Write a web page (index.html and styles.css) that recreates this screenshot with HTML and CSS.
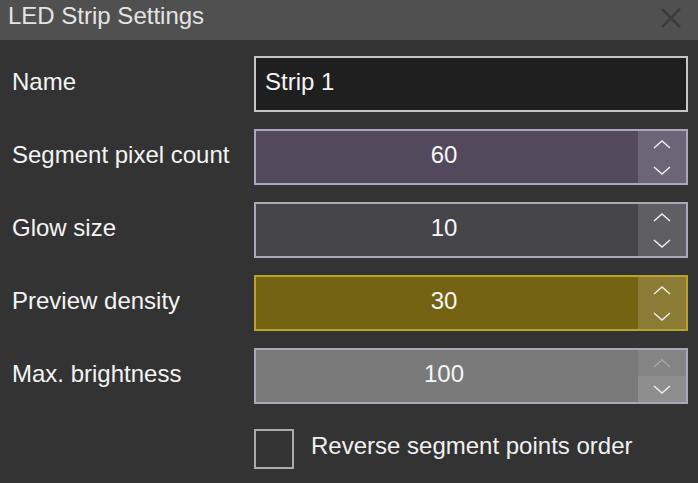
FILE: index.html
```html
<!DOCTYPE html>
<html>
<head>
<meta charset="utf-8">
<link rel="stylesheet" href="styles.css">
</head>
<body>
<div class="dialog">
  <div class="titlebar">
    <span class="title">LED Strip Settings</span>
    <svg class="close" width="22" height="22" viewBox="0 0 22 22"><path d="M2 2L20 20M20 2L2 20" stroke="#3b3b3b" stroke-width="2.6" fill="none"/></svg>
  </div>
  <div class="form">
    <div class="row">
      <span class="label">Name</span>
      <div class="text-input">Strip 1</div>
    </div>
    <div class="row">
      <span class="label">Segment pixel count</span>
      <div class="spin spin-purple">
        <div class="value">60</div>
        <div class="buttons">
          <div class="btn"><svg width="18" height="9" viewBox="0 0 18 9"><path d="M1 8L9 1L17 8" stroke="#f0f0f0" stroke-width="1.4" fill="none"/></svg></div>
          <div class="btn"><svg width="18" height="9" viewBox="0 0 18 9"><path d="M1 1L9 8L17 1" stroke="#f0f0f0" stroke-width="1.4" fill="none"/></svg></div>
        </div>
      </div>
    </div>
    <div class="row">
      <span class="label">Glow size</span>
      <div class="spin spin-gray">
        <div class="value">10</div>
        <div class="buttons">
          <div class="btn"><svg width="18" height="9" viewBox="0 0 18 9"><path d="M1 8L9 1L17 8" stroke="#f0f0f0" stroke-width="1.4" fill="none"/></svg></div>
          <div class="btn"><svg width="18" height="9" viewBox="0 0 18 9"><path d="M1 1L9 8L17 1" stroke="#f0f0f0" stroke-width="1.4" fill="none"/></svg></div>
        </div>
      </div>
    </div>
    <div class="row">
      <span class="label">Preview density</span>
      <div class="spin spin-yellow">
        <div class="value">30</div>
        <div class="buttons">
          <div class="btn"><svg width="18" height="9" viewBox="0 0 18 9"><path d="M1 8L9 1L17 8" stroke="#f0f0f0" stroke-width="1.4" fill="none"/></svg></div>
          <div class="btn"><svg width="18" height="9" viewBox="0 0 18 9"><path d="M1 1L9 8L17 1" stroke="#f0f0f0" stroke-width="1.4" fill="none"/></svg></div>
        </div>
      </div>
    </div>
    <div class="row">
      <span class="label">Max. brightness</span>
      <div class="spin spin-light">
        <div class="value">100</div>
        <div class="buttons">
          <div class="btn btn-disabled"><svg width="18" height="9" viewBox="0 0 18 9"><path d="M1 8L9 1L17 8" stroke="#a6a6a6" stroke-width="1.4" fill="none"/></svg></div>
          <div class="btn btn-hover"><svg width="18" height="9" viewBox="0 0 18 9"><path d="M1 1L9 8L17 1" stroke="#f0f0f0" stroke-width="1.4" fill="none"/></svg></div>
        </div>
      </div>
    </div>
    <div class="check-row">
      <div class="checkbox"></div>
      <span class="check-label">Reverse segment points order</span>
    </div>
  </div>
</div>
</body>
</html>
```

FILE: styles.css
```css
html, body {
  margin: 0;
  padding: 0;
  background: #333333;
}
body {
  font-family: "Liberation Sans", Arial, sans-serif;
  color: #f2f2f2;
  width: 698px;
  height: 483px;
  overflow: hidden;
}
.titlebar {
  height: 40px;
  background: #505050;
  display: flex;
  align-items: center;
  justify-content: space-between;
  padding: 0 16px 0 8px;
}
.title {
  font-size: 24px;
  color: #e4e4e4;
  margin-top: -8px;
}
.close {
  margin-top: -4px;
}
.form {
  padding: 16px 10px 0 12px;
  display: flex;
  flex-direction: column;
  gap: 17px;
}
.row {
  display: flex;
  align-items: center;
  height: 56px;
}
.label {
  width: 242px;
  font-size: 24px;
  color: #f4f4f4;
  padding-bottom: 4px;
}
.text-input {
  box-sizing: border-box;
  width: 434px;
  height: 56px;
  border: 2px solid #c6c6c6;
  background: #1f1f1f;
  font-size: 24px;
  color: #f4f4f4;
  display: flex;
  align-items: center;
  padding: 0 0 4px 9px;
}
.spin {
  box-sizing: border-box;
  width: 434px;
  height: 56px;
  border: 2px solid #aba7ba;
  display: flex;
}
.value {
  flex: 1;
  display: flex;
  align-items: center;
  justify-content: center;
  font-size: 24px;
  color: #f6f6f6;
  padding: 0 6px 4px 0;
}
.buttons {
  width: 48px;
  display: flex;
  flex-direction: column;
}
.btn {
  flex: 1;
  display: flex;
  align-items: center;
  justify-content: center;
}
.spin-purple { background: #524a5c; }
.spin-purple .buttons { background: #6b6577; }
.spin-gray { background: #454449; }
.spin-gray .buttons { background: #5f5e63; }
.spin-yellow { background: #736312; border-color: #b9a42b; }
.spin-yellow .buttons { background: #8b7b35; }
.spin-light { background: #7a7a7a; }
.spin-light .btn-disabled { background: #848484; }
.spin-light .btn-hover { background: #8e8e8e; }
.check-row {
  display: flex;
  align-items: center;
  margin-top: 8px;
  padding-left: 242px;
}
.checkbox {
  box-sizing: border-box;
  width: 40px;
  height: 40px;
  border: 2px solid #ababab;
  margin-right: 17px;
}
.check-label {
  font-size: 24px;
  color: #f0f0f0;
  margin-top: -6px;
}
```
